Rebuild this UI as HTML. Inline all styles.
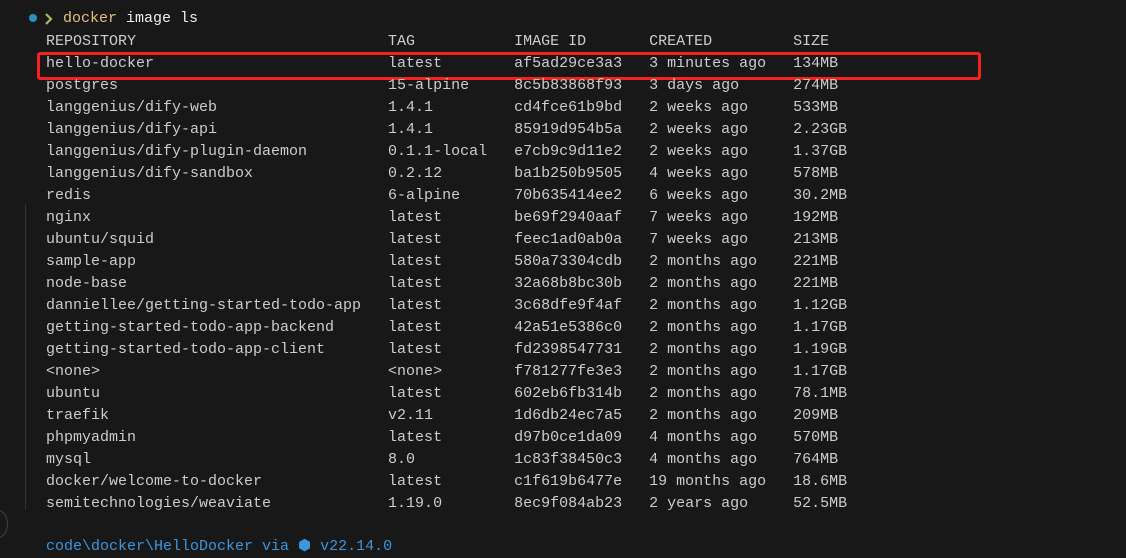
<!DOCTYPE html>
<html><head><meta charset="utf-8"><style>
html,body{margin:0;padding:0;background:#181818;width:1126px;height:545px;overflow:hidden}
pre{position:absolute;left:46px;top:31px;margin:0;font-family:"Liberation Mono",monospace;font-size:15px;line-height:22px;color:#cccccc;letter-spacing:0}
.p{position:absolute;top:8px;left:63px;font-family:"Liberation Mono",monospace;font-size:15px;line-height:22px;color:#eee}
.box{position:absolute;left:37px;top:52px;width:938px;height:22px;border:3px solid #f5211d;border-radius:3px}
.dot{position:absolute;left:29px;top:14px;width:8px;height:8px;border-radius:50%;background:#2a8fc1}
.vl{position:absolute;left:25px;top:204px;width:1px;height:306px;background:#333}
.circ{position:absolute;left:-12px;top:510px;width:18px;height:26px;border:1px solid #444;border-radius:50%}
.bot{position:absolute;left:46px;top:536px;font-family:"Liberation Mono",monospace;font-size:15px;line-height:22px;color:#3a96dd}
</style></head><body>
<div class="dot"></div>
<svg style="position:absolute;left:44px;top:12px" width="10" height="14"><path d="M2 2 L7 7 L2 12" stroke="#a8bd5a" stroke-width="2.2" fill="none"/></svg>
<div class="p"><span style="color:#e2c07a">docker</span> image ls</div>
<div class="vl"></div>
<div class="circ"></div>
<div class="box"></div>
<pre>REPOSITORY                            TAG           IMAGE ID       CREATED         SIZE
hello-docker                          latest        af5ad29ce3a3   3 minutes ago   134MB
postgres                              15-alpine     8c5b83868f93   3 days ago      274MB
langgenius/dify-web                   1.4.1         cd4fce61b9bd   2 weeks ago     533MB
langgenius/dify-api                   1.4.1         85919d954b5a   2 weeks ago     2.23GB
langgenius/dify-plugin-daemon         0.1.1-local   e7cb9c9d11e2   2 weeks ago     1.37GB
langgenius/dify-sandbox               0.2.12        ba1b250b9505   4 weeks ago     578MB
redis                                 6-alpine      70b635414ee2   6 weeks ago     30.2MB
nginx                                 latest        be69f2940aaf   7 weeks ago     192MB
ubuntu/squid                          latest        feec1ad0ab0a   7 weeks ago     213MB
sample-app                            latest        580a73304cdb   2 months ago    221MB
node-base                             latest        32a68b8bc30b   2 months ago    221MB
danniellee/getting-started-todo-app   latest        3c68dfe9f4af   2 months ago    1.12GB
getting-started-todo-app-backend      latest        42a51e5386c0   2 months ago    1.17GB
getting-started-todo-app-client       latest        fd2398547731   2 months ago    1.19GB
&lt;none&gt;                                &lt;none&gt;        f781277fe3e3   2 months ago    1.17GB
ubuntu                                latest        602eb6fb314b   2 months ago    78.1MB
traefik                               v2.11         1d6db24ec7a5   2 months ago    209MB
phpmyadmin                            latest        d97b0ce1da09   4 months ago    570MB
mysql                                 8.0           1c83f38450c3   4 months ago    764MB
docker/welcome-to-docker              latest        c1f619b6477e   19 months ago   18.6MB
semitechnologies/weaviate             1.19.0        8ec9f084ab23   2 years ago     52.5MB</pre>
<div class="bot">code\docker\HelloDocker via ⬢ v22.14.0</div>
</body></html>
